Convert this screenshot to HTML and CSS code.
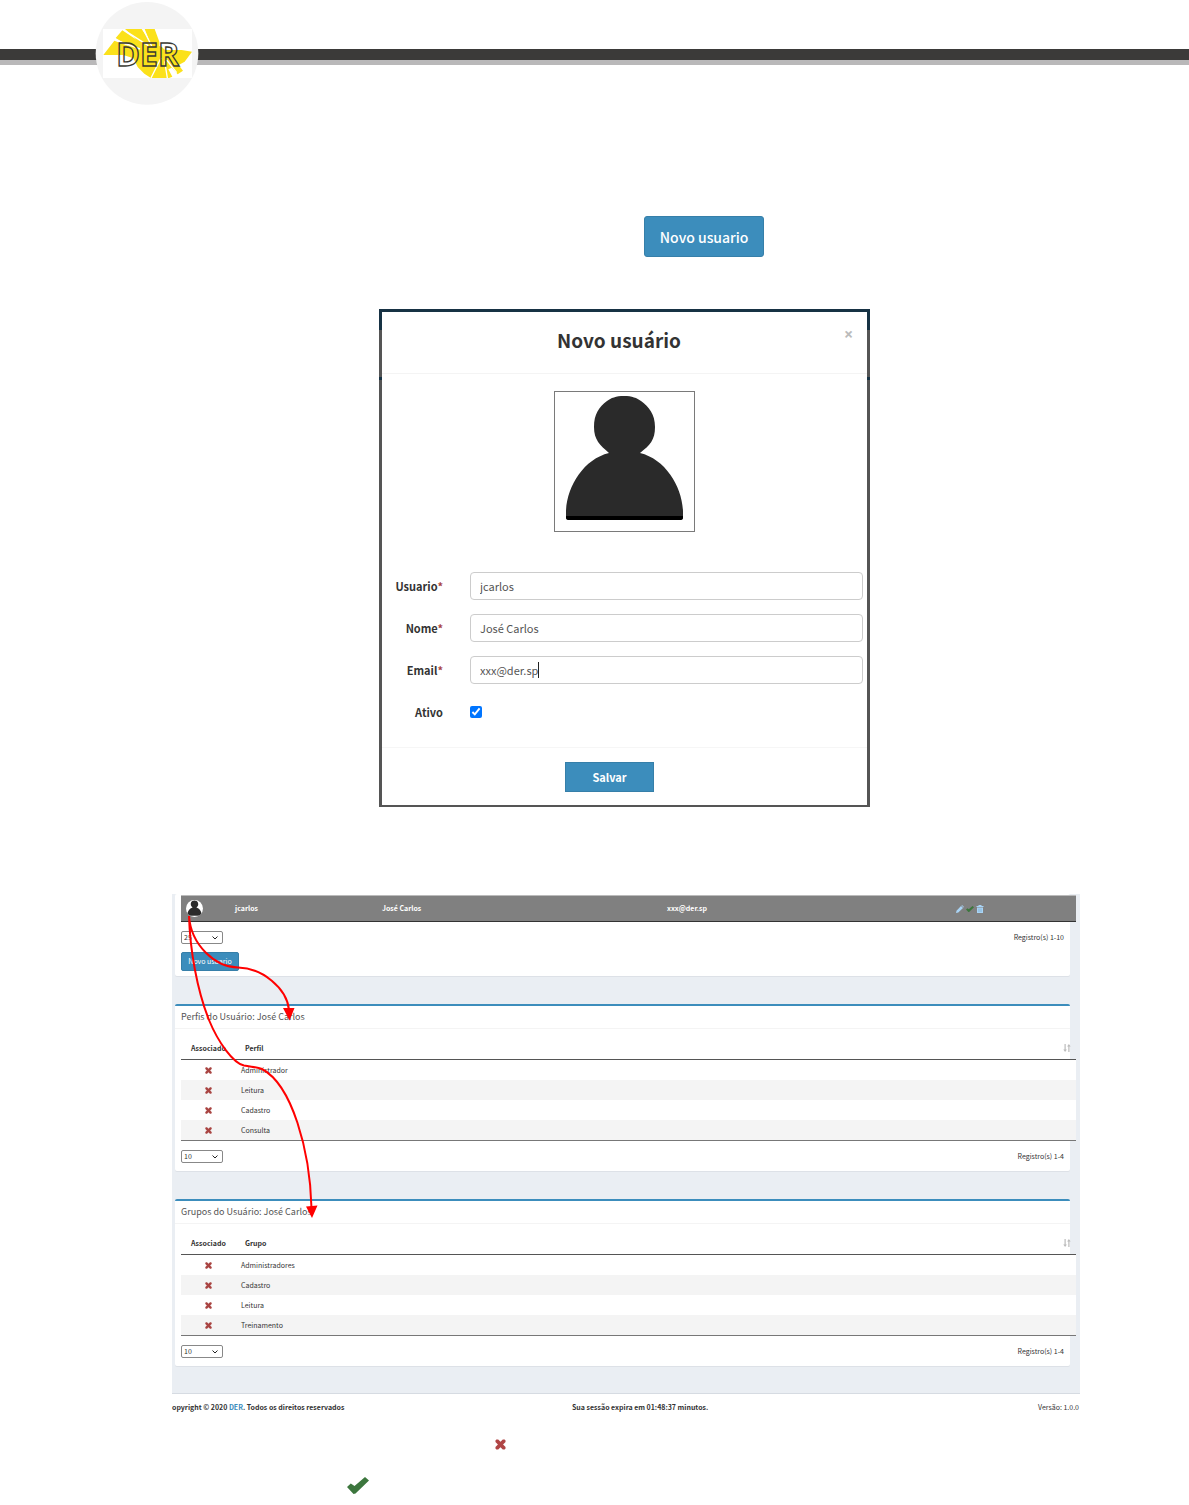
FILE: index.html
```html
<!DOCTYPE html>
<html lang="pt-BR">
<head>
<meta charset="utf-8">
<meta name="viewport" content="width=device-width, initial-scale=1">
<title>DER - Novo usuário</title>
<link rel="stylesheet" href="styles.css">
</head>
<body>
<svg class="defs" aria-hidden="true">
  <symbol id="times" viewBox="0 0 12 12"><path d="M1.5 .6h2L6 3 8.500 .6h2l1 1v1.700L8.800 6l2.700 2.700v1.700l-1 1h-2L6 9l-2.500 2.400h-2l-1-1V8.700L3.200 6 .5 3.300V1.600z"/></symbol>
  <symbol id="check" viewBox="0 0 22 17"><path d="M0 10 3.800 6.500 7.500 9 18 0 22 3.500 8.500 16.500 6.500 17z"/></symbol>
  <symbol id="person" viewBox="0 0 139 139"><path fill="#2a2a2a" d="M69 4c8 0 13 2 17 5 8 6 14 13 14 26s-5 18-15 26c25 6 42 33 43 58v6H11v-6c1-25 18-52 43-58-9-8-15-13-15-26S44 15 52 9c4-3 9-5 17-5z"/><path d="M11 124h117v2q0 2-3 2H14q-3 0-3-2z"/></symbol>
  <symbol id="sort" viewBox="0 0 8 8"><path d="M1.500 0h1.200v5.500h1.200L2.100 8 .3 5.500h1.200zM5.300 8h1.200V2.500h1.200L5.900 0 4.100 2.500h1.200z"/></symbol>
</svg>

<header class="letterhead">
  <svg class="logo" viewBox="45 0 315 318" role="img" aria-label="DER">
    <circle cx="201" cy="160" r="154" fill="#f4f4f4"/>
    <path fill="#fff" d="M69 87h267v147H69z"/>
    <path fill="#fbe11b" d="M70 165l33-43 60 22-18 21zM107 114l20-23 75 50 20 30-70-30zM135 87h50l40 60-20 5zM194 87h30l14 38v20l10 20-20 10z"/>
    <path fill="#fbe11b" d="M110 165l40-30 60-5 35 10 10 10h50l31 5-22 30-18 10 13 17-16 11-18-20-10 5 12 22-10 4h-54l-20-13-20-20-13-26-30-10z"/>
    <path stroke="#fff" stroke-width="4" fill="none" d="M104 119l76 28M130 89l75 48M190 88l25 50M213 234l30-60M262 234l-8-50M290 218l-30-38"/>
    <text x="109" y="197" class="logo-text">DER</text>
  </svg>
</header>

<main class="page">
  <div class="action"><button class="btn btn-large" type="button">Novo usuario</button></div>

  <section class="dialog" role="dialog" aria-labelledby="dialog-title">
    <form class="dialog-inner">
      <header class="dialog-head">
        <h1 id="dialog-title">Novo usuário</h1>
        <button class="close" type="button" aria-label="Fechar">×</button>
      </header>
      <div class="photo"><svg><use href="#person"/></svg></div>
      <div class="fields">
        <label for="usuario">Usuario<span class="req">*</span></label>
        <input class="text" id="usuario" type="text" value="jcarlos">
        <label for="nome">Nome<span class="req">*</span></label>
        <input class="text" id="nome" type="text" value="José Carlos">
        <label for="email">Email<span class="req">*</span></label>
        <div class="focused"><input class="text" id="email" type="text" value="xxx@der.sp"><span class="caret"></span></div>
        <label for="ativo">Ativo</label>
        <input class="tick" id="ativo" type="checkbox" checked>
      </div>
      <footer class="dialog-foot"><button class="btn btn-save" type="button">Salvar</button></footer>
    </form>
  </section>

  <section class="screen">
    <div class="screen-body">
      <section class="panel panel-users">
        <table class="grid users">
          <colgroup><col class="c-assoc"><col class="c-login"><col class="c-name"><col class="c-mail"><col></colgroup>
          <tbody><tr>
            <td><span class="face"><svg><use href="#person"/></svg></span></td>
            <td>jcarlos</td><td>José Carlos</td><td>xxx@der.sp</td>
            <td><span class="tools">
              <svg class="tool" viewBox="0 0 8 8"><path fill="#a9d4f5" d="M0 8l.5-2.200L5 1l2 2-4.700 4.500zM5.500.5L6 0l2 2-.5.5z"/></svg>
              <svg class="tool tool-ok"><use href="#check"/></svg>
              <svg class="tool" viewBox="0 0 8 8"><path fill="#a9d4f5" d="M.5 1h2V0h3v1h2v1h-7zM1 2.500h6V8H1z"/><path stroke="#6fa0c4" stroke-width=".6" d="M3 3.500v3.500M5 3.500v3.500"/></svg>
            </span></td>
          </tr></tbody>
        </table>
        <div class="pager"><select aria-label="Registros por página"><option>25</option></select><span>Registro(s) 1-10</span></div>
        <button class="btn btn-small" type="button">Novo usuario</button>
      </section>

      <section class="panel panel-box">
        <h2>Perfis do Usuário: José Carlos</h2>
        <table class="grid">
          <colgroup><col class="c-assoc"><col></colgroup>
          <thead><tr><th>Associado</th><th><span class="sortable">Perfil<svg class="sort"><use href="#sort"/></svg></span></th></tr></thead>
          <tbody>
            <tr><td><svg class="x"><use href="#times"/></svg></td><td>Administrador</td></tr>
            <tr><td><svg class="x"><use href="#times"/></svg></td><td>Leitura</td></tr>
            <tr><td><svg class="x"><use href="#times"/></svg></td><td>Cadastro</td></tr>
            <tr><td><svg class="x"><use href="#times"/></svg></td><td>Consulta</td></tr>
          </tbody>
        </table>
        <div class="pager"><select aria-label="Perfis por página"><option>10</option></select><span>Registro(s) 1-4</span></div>
      </section>

      <section class="panel panel-box">
        <h2>Grupos do Usuário: José Carlos</h2>
        <table class="grid">
          <colgroup><col class="c-assoc"><col></colgroup>
          <thead><tr><th>Associado</th><th><span class="sortable">Grupo<svg class="sort"><use href="#sort"/></svg></span></th></tr></thead>
          <tbody>
            <tr><td><svg class="x"><use href="#times"/></svg></td><td>Administradores</td></tr>
            <tr><td><svg class="x"><use href="#times"/></svg></td><td>Cadastro</td></tr>
            <tr><td><svg class="x"><use href="#times"/></svg></td><td>Leitura</td></tr>
            <tr><td><svg class="x"><use href="#times"/></svg></td><td>Treinamento</td></tr>
          </tbody>
        </table>
        <div class="pager"><select aria-label="Grupos por página"><option>10</option></select><span>Registro(s) 1-4</span></div>
      </section>
    </div>
    <footer class="screen-foot">
      <strong>opyright © 2020 <a href="#der">DER</a>. Todos os direitos reservados</strong>
      <strong>Sua sessão expira em 01:48:37 minutos.</strong>
      <span>Versão: 1.0.0</span>
    </footer>
    <svg class="arrows" viewBox="172 894 150 330" aria-hidden="true">
      <path fill="none" stroke="#f00" stroke-width="2" d="M189 916C191 945 215 967 238 967.500C262 968 287 988 289 1010M189 916C190 950 197 990 209 1020C218 1042 233 1063 244 1065.500C252 1067 257 1067 262 1069C292 1085 310 1150 311.500 1208"/>
      <path fill="#f00" d="M283 1008h11.500l-5 12.500zM306 1206.500l11.500-1-5.500 12.500z"/>
    </svg>
  </section>

  <div class="mark mark-x"><svg><use href="#times"/></svg></div>
  <div class="mark mark-ok"><svg><use href="#check"/></svg></div>
</main>
</body>
</html>
```

FILE: styles.css
```css
* { box-sizing: border-box; }
body {
  margin: 0;
  background: #fff;
  color: #333;
  font-family: "Noto Sans CJK JP", "Noto Sans", sans-serif;
  font-size: 11px;
  line-height: 1;
}
button, input, select { font: inherit; margin: 0; }
h1, h2 { margin: 0; }
svg { display: block; }
.defs { position: absolute; width: 0; height: 0; }

/* letterhead */
.letterhead {
  padding-left: 95px;
  background: linear-gradient(#fff 49px, #3b3a39 49px, #3b3a39 60px, #b9b8b9 60px, #b9b8b9 65px, #fff 65px);
}
.logo { width: 105px; height: 106px; }
.logo-text {
  font: bold 96px "Open Sans", sans-serif;
  fill: none;
  stroke: #3a3a32;
  stroke-width: 4px;
}

.page { padding: 110px 109px 11px 172px; }

/* buttons */
.btn {
  border: 1px solid #367fa9;
  border-radius: 3px;
  background: #3c8dbc;
  color: #fff;
  padding: 0;
}
.action { padding-left: 52%; }
.btn-large { width: 120px; height: 41px; font-size: 14px; font-weight: 500; display: block; }
.btn-save { width: 89px; height: 30px; border-radius: 0; font-weight: 700; }
.btn-small { width: 58px; height: 19px; margin: 8px 6px 0; font-size: 7px; display: block; border-radius: 2px; }

/* dialog */
.dialog {
  max-width: 491px;
  margin: 52px 0 0 207px;
  padding: 3px 3px 2px;
  background: linear-gradient(#173244 21px, #555 21px, #555 68px, #173244 68px, #173244 71px, #555 71px);
}
.dialog-inner { background: #fff; }
.dialog-head {
  display: flex;
  align-items: flex-start;
  height: 62px;
  padding: 16px 13px 0;
  border-bottom: 1px solid #f4f4f4;
}
h1 { flex: 1; font-size: 19px; line-height: 24px; text-align: center; }
.close {
  width: 11px;
  padding: 0;
  border: 0;
  background: none;
  color: #bbb;
  font-family: "Open Sans", sans-serif;
  font-size: 16px;
  line-height: 12px;
  font-weight: 700;
}
.photo {
  width: 141px;
  height: 141px;
  margin: 17px auto 40px;
  border: 1px solid #7a7a7a;
}
.photo svg { width: 139px; height: 139px; }
.fields {
  display: grid;
  grid-template-columns: 61px 1fr;
  gap: 14px 27px;
  padding-right: 4px;
  align-items: center;
}
.fields label { text-align: right; font-weight: 700; line-height: 28px; white-space: nowrap; }
.req { color: #a94442; }
.text {
  display: block;
  width: 100%;
  height: 28px;
  padding: 0 9px 1px;
  border: 1px solid #ccc;
  border-radius: 4px;
  color: #555;
}
.focused { position: relative; }
.caret { position: absolute; left: 68px; top: 6px; width: 1px; height: 16px; background: #222; }
.tick { width: 12px; height: 12px; accent-color: #0075ff; }
.dialog-foot {
  display: flex;
  justify-content: center;
  margin-top: 21px;
  padding: 14px 30px 13px 0;
  border-top: 1px solid #f6f6f6;
}

/* application screen */
.screen { position: relative; margin-top: 87px; font-size: 7px; }
.screen-body {
  padding: 0 10px 27px 3px;
  background: #eaeef3;
  border-bottom: 1px solid #d6dbe2;
}
.panel { background: #fff; box-shadow: 0 1px 0 #dde1e7; border-radius: 2px; }
.panel-users { padding: 1px 0 5px; }
.panel-box { margin-top: 28px; border-top: 2px solid #3c8dbc; padding-bottom: 8px; }
h2 {
  padding-left: 6px;
  border-bottom: 1px solid #f4f4f4;
  font-size: 9px;
  font-weight: 400;
  line-height: 22px;
  color: #555;
}
.grid {
  width: 100%;
  position: relative;
  left: 6px;
  table-layout: fixed;
  border-collapse: separate;
  border-spacing: 0;
  border-bottom: 1px solid #777;
}
.grid th, .grid td { padding: 0 6px; text-align: left; }
.grid td { height: 20px; }
.grid th { height: 31px; padding: 8px 5px 0 10px; border-bottom: 1px solid #555; }
.grid th:first-child { padding-right: 10px; }
.grid tbody tr { background: #fff; }
.grid tbody tr:nth-child(even) { background: #f4f4f4; }
.c-assoc { width: 54px; }
.c-login { width: 147px; }
.c-name { width: 285px; }
.c-mail { width: 289px; }
.sortable { display: flex; justify-content: space-between; align-items: center; }
.sort { width: 8px; height: 8px; fill: #bbb; }
.x { width: 7px; height: 7px; margin: 0 auto; fill: #a94442; }
.users { border-top: 1px solid #bbb; border-bottom-color: #333; }
.grid.users tbody tr { background: #808080; color: #fff; font-weight: 700; }
.grid.users td { height: 25px; padding: 0; }
.grid.users td:first-child { padding-left: 5px; }
.face { display: block; width: 17px; height: 17px; border-radius: 50%; background: #fff; overflow: hidden; }
.face svg { width: 17px; height: 17px; }
.tools { display: flex; gap: 2px; }
.tool { width: 8px; height: 8px; }
.tool-ok { fill: #3c763d; }
.pager {
  display: flex;
  justify-content: space-between;
  align-items: center;
  padding: 9px 6px 0;
}
.pager select {
  appearance: none;
  width: 42px;
  height: 13px;
  padding: 0 2px;
  border: 1px solid #888;
  border-radius: 2px;
  background: #fff url("data:image/svg+xml,%3Csvg xmlns='http://www.w3.org/2000/svg' width='6' height='4'%3E%3Cpath d='M.5.5 3 3 5.500.5' fill='none' stroke='%23222'/%3E%3C/svg%3E") no-repeat right 4px center;
  color: #333;
}
.screen-foot {
  display: grid;
  grid-template-columns: 400px 1fr auto;
  padding: 9px 1px 0 0;
  line-height: 8px;
  white-space: nowrap;
}
a { color: #3c8dbc; text-decoration: none; }
.arrows { position: absolute; left: 0; top: 0; width: 150px; height: 330px; }

/* status marks */
.mark svg { width: 22px; height: 17px; }
.mark-x { padding: 28px 0 0 323px; }
.mark-x svg { width: 11px; height: 11px; fill: #b04545; }
.mark-ok { padding: 27px 0 0 175px; }
.mark-ok svg { fill: #3c763d; }
```
